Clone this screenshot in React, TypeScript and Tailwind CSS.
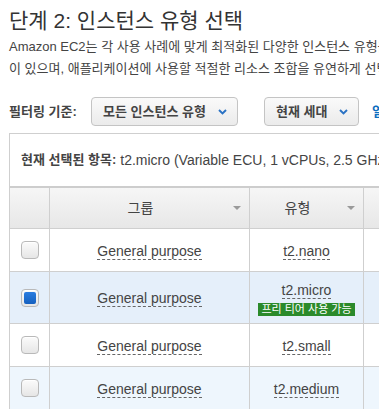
import React from "react";

const rows = [
  { type: "t2.nano", checked: false, bg: "bg-white" },
  { type: "t2.micro", checked: true, bg: "bg-[#e5effa]", freeTier: true },
  { type: "t2.small", checked: false, bg: "bg-white" },
  { type: "t2.medium", checked: false, bg: "bg-[#eef6fd]" },
];

function Chevron() {
  return (
    <svg width="9" height="6" viewBox="0 0 9 6" className="shrink-0">
      <path d="M1 1l3.5 3.5L8 1" fill="none" stroke="#2a72c4" strokeWidth="1.9" />
    </svg>
  );
}

function SortArrow() {
  return (
    <svg width="8" height="4" viewBox="0 0 8 4" className="absolute right-[8px] top-1/2 -translate-y-1/2">
      <path d="M0 0h8L4 4z" fill="#9a9a9a" />
    </svg>
  );
}

function Checkbox({ checked }: { checked: boolean }) {
  return (
    <div className="flex h-[18px] w-[18px] items-center justify-center rounded-[4px] border border-[#b9b9b9] bg-gradient-to-b from-[#fbfbfb] to-[#e6e6e6] shadow-[inset_0_1px_0_#fff]">
      {checked && (
        <div className="h-[12px] w-[12px] rounded-[2px] bg-gradient-to-b from-[#2a7de0] to-[#1560bf]" />
      )}
    </div>
  );
}

function Dashed({ children }: { children: React.ReactNode }) {
  return (
    <span className="inline-block border-b border-dashed border-[#666] leading-[16px]">{children}</span>
  );
}

export default function App() {
  return (
    <div className="h-[409px] w-[379px] overflow-hidden bg-white font-['Liberation_Sans','Noto_Sans_CJK_KR',sans-serif] text-[#444]">
      <div className="w-[900px] pl-[9px]">
        <h1 className="pt-[6px] text-[21px] leading-[30px] text-[#333]">단계 2: 인스턴스 유형 선택</h1>
        <p className="text-[13px] leading-[22px] whitespace-nowrap">
          <span className="block">
            Amazon EC2는 각 사용 사례에 맞게 최적화된 다양한 인스턴스 유형을 제공합니다. 인스턴스는 CPU, 메모리, 스토리지 및 네트워킹 용량의 다양한 조합
          </span>
          <span className="block">
            이 있으며, 애플리케이션에 사용할 적절한 리소스 조합을 유연하게 선택할 수 있습니다.
          </span>
        </p>

        <div className="mt-[17px] flex h-[29px] items-center text-[13px] font-bold">
          <span className="w-[82px] whitespace-nowrap">필터링 기준:</span>
          <button className="flex h-[29px] w-[147px] items-center justify-between rounded-[4px] border border-[#c4c4c4] bg-gradient-to-b from-[#fafafa] to-[#ebebeb] pl-[11px] pr-[10px] font-bold text-[#444]">
            <span>모든 인스턴스 유형</span>
            <Chevron />
          </button>
          <button className="ml-[26px] flex h-[29px] w-[95px] items-center justify-between rounded-[4px] border border-[#c4c4c4] bg-gradient-to-b from-[#fafafa] to-[#ebebeb] pl-[11px] pr-[10px] font-bold text-[#444]">
            <span>현재 세대</span>
            <Chevron />
          </button>
          <span className="ml-[13px] text-[#0d6fc0]">열 표시/숨기기</span>
        </div>

        <div className="mt-[7px] border-l border-t border-[#cfcfcf]">
          <div className="flex h-[52px] items-center whitespace-nowrap px-[11px] text-[13px]">
            <span className="font-bold">현재 선택된 항목:</span>
            <span className="ml-[4px] text-[14px]">
              t2.micro (Variable ECU, 1 vCPUs, 2.5 GHz, Intel Xeon Family, 1 GiB 메모리, EBS 전용)
            </span>
          </div>

          <div className="flex h-[42px] border-t-2 border-[#cdcdcd] bg-gradient-to-b from-[#f6f6f6] to-[#e7e7e7] text-[14px]">
            <div className="w-[40px] border-r border-[#cfcfcf]" />
            <div className="relative flex w-[200px] items-center justify-center border-r border-[#cfcfcf] pr-[18px]">
              그룹
              <SortArrow />
            </div>
            <div className="relative flex w-[114px] items-center justify-center border-r border-[#cfcfcf] pr-[18px]">
              유형
              <SortArrow />
            </div>
            <div className="w-[200px]" />
          </div>

          {rows.map((row) => (
            <div
              key={row.type}
              className={`flex border-t border-[#cfcfcf] text-[14px] ${row.bg} ${row.freeTier ? "h-[52px]" : "h-[43px]"}`}
            >
              <div className="flex w-[40px] items-center justify-center border-r border-[#cfcfcf]">
                <Checkbox checked={row.checked} />
              </div>
              <div className="flex w-[200px] items-center justify-center border-r border-[#cfcfcf] pt-[2px]">
                <Dashed>General purpose</Dashed>
              </div>
              <div className="flex w-[114px] flex-col items-center justify-center border-r border-[#cfcfcf] pt-[2px]">
                <Dashed>{row.type}</Dashed>
                {row.freeTier && (
                  <span className="mt-[4px] bg-[#2b8a2b] px-[3px] text-[11px] leading-[13px] text-white whitespace-nowrap">
                    프리 티어 사용 가능
                  </span>
                )}
              </div>
              <div className="w-[200px]" />
            </div>
          ))}
        </div>
      </div>
    </div>
  );
}
